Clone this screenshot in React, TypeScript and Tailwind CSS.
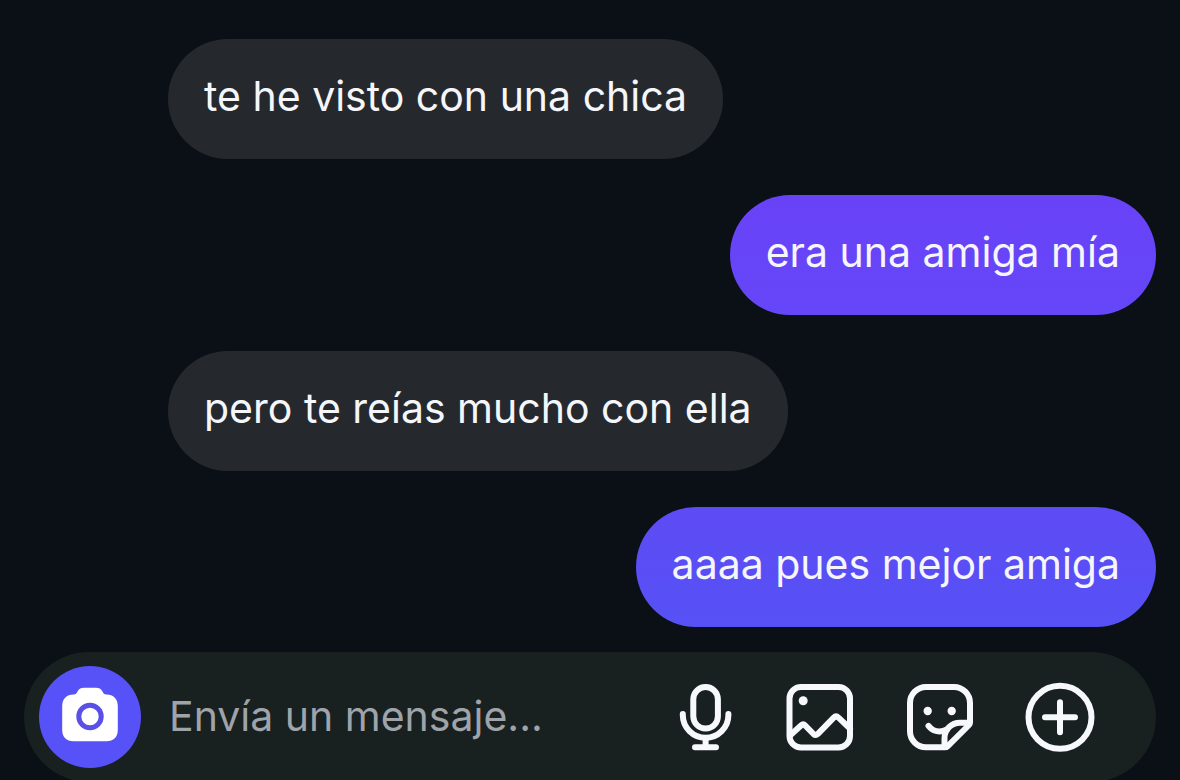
import type { ReactNode } from "react";

type Message = { id: number; text: string; own: boolean; tone: string };

const messages: Message[] = [
  { id: 1, text: "te he visto con una chica", own: false, tone: "bg-[#25292e]" },
  { id: 2, text: "era una amiga mía", own: true, tone: "bg-linear-to-b from-[#6942f7] to-[#6546f8]" },
  { id: 3, text: "pero te reías mucho con ella", own: false, tone: "bg-[#25292e]" },
  { id: 4, text: "aaaa pues mejor amiga", own: true, tone: "bg-linear-to-b from-[#5d4bf4] to-[#5651f6]" },
];

function Bubble({ message }: { message: Message }) {
  return (
    <li className={message.own ? "flex justify-end" : "flex justify-start pl-36"}>
      <p className={`rounded-full px-9 pt-8 pb-[38px] text-[41px] leading-[50px] text-[#f5f6fa] ${message.tone}`}>
        {message.text}
      </p>
    </li>
  );
}

function IconButton({ label, children }: { label: string; children: ReactNode }) {
  return (
    <button type="button" aria-label={label} className="shrink-0 cursor-pointer text-[#f7f8fc]">
      {children}
    </button>
  );
}

const stroke = {
  fill: "none",
  stroke: "currentColor",
  strokeWidth: 6,
  strokeLinecap: "round",
  strokeLinejoin: "round",
} as const;

function CameraIcon() {
  return (
    <svg width="60" height="60" viewBox="0 0 60 60" aria-hidden="true">
      <path
        fill="#fff"
        d="M13.5 7.5C16 7.5 16.5 6.5 17.5 4.5C19 1.8 21 .8 24 .8H36C39 .8 41 1.8 42.5 4.5C43.5 6.5 44 7.5 46.5 7.5C53.5 7.5 57.8 12 57.8 19V43C57.8 50 53.5 54.3 46.5 54.3H13.5C6.5 54.3 2.2 50 2.2 43V19C2.2 12 6.5 7.5 13.5 7.5Z"
      />
      <circle cx="30" cy="29.5" r="11.2" fill="none" stroke="#5a50e8" strokeWidth="5" />
    </svg>
  );
}

function MicIcon() {
  return (
    <svg width="60" height="72" viewBox="0 0 60 72" aria-hidden="true" {...stroke}>
      <rect x="17.3" y="6" width="24.6" height="41.6" rx="12.3" />
      <path d="M6.8 33v1a22.8 22.8 0 0 0 45.6 0v-1" />
      <path d="M29.6 57v9M19 66.3h21" />
    </svg>
  );
}

function PhotoIcon() {
  return (
    <svg width="72" height="72" viewBox="0 0 72 72" aria-hidden="true" {...stroke}>
      <rect x="5.5" y="6" width="60.5" height="60.5" rx="11.5" />
      <circle cx="19.2" cy="19.7" r="4.5" fill="currentColor" stroke="none" />
      <path d="M6 54.5L17 44.5Q19.2 42.5 21.3 44.6L29.5 53Q31.7 55 33.9 52.9L49.5 36.8Q52 34.3 54.500 36.6L66 47.5" />
    </svg>
  );
}

function StickerIcon() {
  return (
    <svg width="72" height="72" viewBox="0 0 72 72" aria-hidden="true" {...stroke}>
      <path d="M41 66.3H22A16 16 0 0 1 6 50.3V22A16 16 0 0 1 22 6H50A16 16 0 0 1 66 22V41.5Q66 43 65 44L43.5 65.3Q42.5 66.3 41 66.3Z" />
      <path d="M65 41.7H56A15.5 15.5 0 0 0 40.5 57.2V65" />
      <path d="M24.5 44.8C29 50.5 36 52 43 48.5" />
      <circle cx="23.7" cy="30" r="4.2" fill="currentColor" stroke="none" />
      <circle cx="47.7" cy="30" r="4.2" fill="currentColor" stroke="none" />
    </svg>
  );
}

function PlusIcon() {
  return (
    <svg width="72" height="72" viewBox="0 0 72 72" aria-hidden="true" {...stroke}>
      <circle cx="36" cy="36.3" r="31.5" />
      <path d="M36 21.3v30M21 36.3h30" />
    </svg>
  );
}

export default function App() {
  return (
    <main className="flex h-screen flex-col overflow-hidden bg-[#0a1015] px-6 pt-[39px] font-['Inter','Liberation_Sans',sans-serif]">
      <ul className="flex flex-col gap-9">
        {messages.map((m) => (
          <Bubble key={m.id} message={m} />
        ))}
      </ul>
      <form
        onSubmit={(e) => e.preventDefault()}
        className="mt-[25px] flex shrink-0 items-center rounded-full bg-[#192020] py-[14px] pr-[60px] pl-[15px]"
      >
        <button
          type="button"
          aria-label="Cámara"
          className="flex size-[102px] shrink-0 cursor-pointer items-center justify-center rounded-full bg-[#5752f8]"
        >
          <CameraIcon />
        </button>
        <input
          type="text"
          aria-label="Envía un mensaje"
          placeholder="Envía un mensaje..."
          className="ml-7 min-w-0 flex-1 bg-transparent pb-[2px] text-[41px] leading-[50px] text-[#f5f6fa] outline-none placeholder:text-[#9fa3aa]"
        />
        <div className="flex items-center gap-12">
          <IconButton label="Mensaje de voz"><MicIcon /></IconButton>
          <IconButton label="Galería"><PhotoIcon /></IconButton>
          <IconButton label="Stickers"><StickerIcon /></IconButton>
          <IconButton label="Más opciones"><PlusIcon /></IconButton>
        </div>
      </form>
    </main>
  );
}
